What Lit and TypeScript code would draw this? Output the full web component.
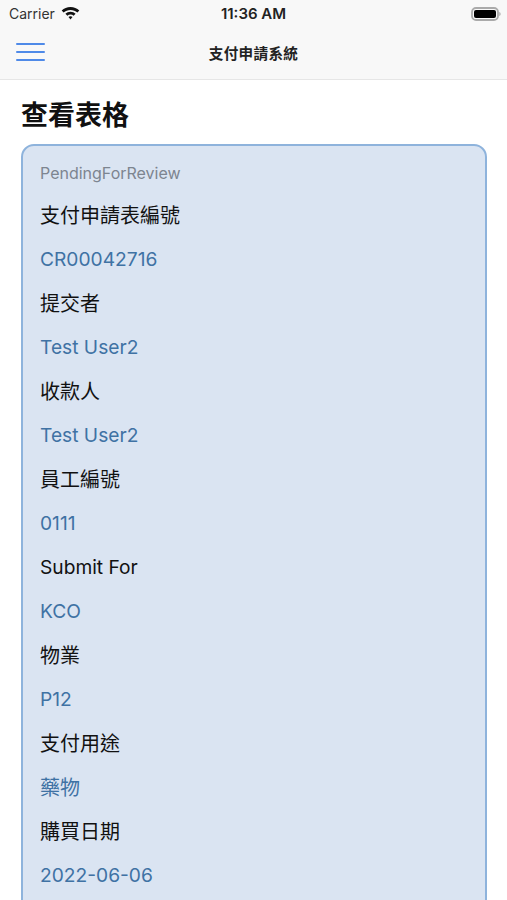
import { LitElement, html, css } from "lit";
import { customElement } from "lit/decorators.js";

const ROWS: [string, string][] = [
  ["支付申請表編號", "CR00042716"],
  ["提交者", "Test User2"],
  ["收款人", "Test User2"],
  ["員工編號", "0111"],
  ["Submit For", "KCO"],
  ["物業", "P12"],
  ["支付用途", "藥物"],
  ["購買日期", "2022-06-06"],
];

const isCjk = (s: string) => /[^\x00-\x7f]/.test(s);

@customElement("app-root")
export class AppRoot extends LitElement {
  static styles = css`
    :host {
      display: block;
      width: 507px;
      height: 900px;
      overflow: hidden;
      background: #fff;
      font-family: Inter, "Noto Sans CJK TC", sans-serif;
      color: #111;
    }
    .top {
      background: #f8f8f8;
      border-bottom: 1px solid #e6e6e6;
      height: 80px;
      box-sizing: border-box;
      display: flex;
      flex-direction: column;
    }
    .status {
      height: 27px;
      display: grid;
      grid-template-columns: 1fr auto 1fr;
      align-items: center;
      padding: 0 6px 0 9px;
      font-size: 14px;
      color: #333;
    }
    .left { display: flex; align-items: center; gap: 6px; }
    .time { font-weight: 600; font-size: 15px; color: #222; margin-left: -3px; }
    .battery { justify-self: end; display: block; }
    .nav {
      flex: 1;
      display: grid;
      grid-template-columns: 1fr auto 1fr;
      align-items: center;
      padding: 0 16px 1px;
    }
    .burger { display: flex; flex-direction: column; gap: 5.5px; width: 29px; margin-top: -1px; }
    .burger span { display: block; height: 2.5px; border-radius: 1px; background: #4f8ae8; }
    .title { font-size: 14.6px; font-weight: 700; color: #222; letter-spacing: 0.3px; }
    .content { padding: 0 20px 0 21px; }
    h1 {
      margin: 0;
      height: 64px;
      box-sizing: border-box;
      padding-top: 7px;
      display: flex;
      align-items: center;
      font-size: 27px;
      font-weight: 700;
      line-height: 1;
      color: #111;
    }
    .card {
      background: #dae4f2;
      border: 2px solid #8eb3dc;
      border-radius: 13px;
      padding: 14px 17px 40px;
      box-sizing: border-box;
    }
    .state {
      font-size: 16px;
      line-height: 26px;
      color: #7d8590;
      margin-bottom: 7px;
    }
    .line {
      height: 44px;
      display: flex;
      align-items: center;
      font-size: 19.2px;
    }
    .line.cjk { font-size: 20px; padding-bottom: 2px; box-sizing: border-box; }
    .label { color: #111; }
    .value { color: #3f72a4; }
  `;

  private line(text: string, kind: string) {
    return html`<div class="line ${kind} ${isCjk(text) ? "cjk" : ""}">${text}</div>`;
  }

  render() {
    return html`
      <div class="top">
        <div class="status">
          <div class="left">
            <span>Carrier</span>
            <svg width="19" height="15" viewBox="0 0 19 15">
              <path d="M9.5 1C6 1 3 2.4.7 4.6l1.9 2C4.4 4.9 6.8 3.9 9.5 3.9s5.1 1 6.9 2.7l1.9-2C16 2.4 13 1 9.5 1z" fill="#111"/>
              <path d="M9.5 5.8c-2 0-3.8.8-5.1 2l2 2c.8-.8 1.9-1.2 3.1-1.2s2.3.4 3.1 1.2l2-2c-1.3-1.2-3.1-2-5.1-2z" fill="#111"/>
              <path d="M9.5 10.3c-.8 0-1.5.3-2 .8l2 2.4 2-2.4c-.5-.5-1.2-.8-2-.8z" fill="#111"/>
            </svg>
          </div>
          <span class="time">11:36 AM</span>
          <svg class="battery" width="30" height="14" viewBox="0 0 30 14">
            <rect x="1" y="1" width="26" height="12" rx="4" fill="none" stroke="#aaa" stroke-width="1.8"/>
            <rect x="3" y="3" width="22" height="8" rx="2" fill="#000"/>
            <path d="M28.3 5v4c.8-.3 1.3-1.1 1.3-2s-.5-1.7-1.3-2z" fill="#aaa"/>
          </svg>
        </div>
        <div class="nav">
          <div class="burger"><span></span><span></span><span></span></div>
          <div class="title">支付申請系統</div>
          <div></div>
        </div>
      </div>
      <div class="content">
        <h1>查看表格</h1>
        <div class="card">
          <div class="state">PendingForReview</div>
          ${ROWS.map(
            ([k, v]) => html`${this.line(k, "label")}${this.line(v, "value")}`
          )}
        </div>
      </div>
    `;
  }
}
